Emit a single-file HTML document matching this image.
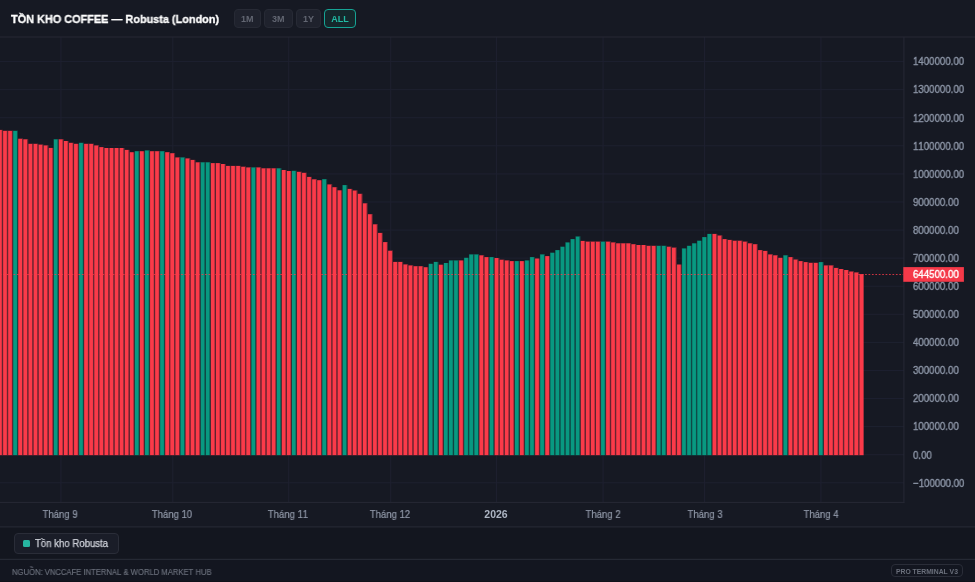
<!DOCTYPE html>
<html><head><meta charset="utf-8">
<style>
html,body{margin:0;padding:0;}
body{font-kerning:none;width:975px;height:582px;overflow:hidden;background:#161923;position:relative;font-family:"Liberation Sans",sans-serif;}
.abs{position:absolute;}
div{will-change:transform;}
.title{-webkit-text-stroke:0.3px currentColor;transform:scaleX(0.99);transform-origin:0 0;position:absolute;left:11px;top:11px;font-size:11px;font-weight:bold;color:#ffffff;white-space:nowrap;line-height:16px;}
.btn{position:absolute;top:8.5px;height:19px;box-sizing:border-box;border:1px solid #272a35;background:#1f222d;border-radius:4px;color:#626672;font-size:9px;font-weight:bold;text-align:center;line-height:18px;}
.btn.on{border:1.5px solid #16a394;background:#15282c;color:#22bba4;line-height:18px;}
.pl{-webkit-text-stroke:0.4px currentColor;position:absolute;left:912.8px;font-size:11px;line-height:13px;transform:scaleX(0.88);transform-origin:0 0;color:#8c95a6;white-space:nowrap;}
.tl{-webkit-text-stroke:0.2px currentColor;position:absolute;top:507.6px;width:80px;text-align:center;font-size:10.5px;line-height:13px;transform:scaleX(0.91);color:#939bab;white-space:nowrap;}
.tl.b{-webkit-text-stroke:0;font-weight:bold;color:#adb5c3;transform:none;}
.hl{position:absolute;left:0;width:975px;height:1px;background:#262935;}
</style></head><body>
<div class="title">TỒN KHO COFFEE — Robusta (London)</div>
<div class="btn" style="left:234px;width:26.5px">1M</div>
<div class="btn" style="left:264px;width:28.6px">3M</div>
<div class="btn" style="left:296px;width:25.2px">1Y</div>
<div class="btn on" style="left:324.2px;width:32px">ALL</div>
<svg class="abs" style="left:0;top:0" width="975" height="582" viewBox="0 0 975 582">
<rect x="0" y="482.28" width="904" height="1" fill="#1e2130"/><rect x="0" y="454.20" width="904" height="1" fill="#1e2130"/><rect x="0" y="426.12" width="904" height="1" fill="#1e2130"/><rect x="0" y="398.04" width="904" height="1" fill="#1e2130"/><rect x="0" y="369.96" width="904" height="1" fill="#1e2130"/><rect x="0" y="341.88" width="904" height="1" fill="#1e2130"/><rect x="0" y="313.80" width="904" height="1" fill="#1e2130"/><rect x="0" y="285.72" width="904" height="1" fill="#1e2130"/><rect x="0" y="257.64" width="904" height="1" fill="#1e2130"/><rect x="0" y="229.56" width="904" height="1" fill="#1e2130"/><rect x="0" y="201.48" width="904" height="1" fill="#1e2130"/><rect x="0" y="173.40" width="904" height="1" fill="#1e2130"/><rect x="0" y="145.32" width="904" height="1" fill="#1e2130"/><rect x="0" y="117.24" width="904" height="1" fill="#1e2130"/><rect x="0" y="89.16" width="904" height="1" fill="#1e2130"/><rect x="0" y="61.08" width="904" height="1" fill="#1e2130"/>
<rect x="60.40" y="37" width="1" height="465" fill="#1e2130"/><rect x="172.30" y="37" width="1" height="465" fill="#1e2130"/><rect x="288.20" y="37" width="1" height="465" fill="#1e2130"/><rect x="390.20" y="37" width="1" height="465" fill="#1e2130"/><rect x="495.90" y="37" width="1" height="465" fill="#1e2130"/><rect x="602.60" y="37" width="1" height="465" fill="#1e2130"/><rect x="704.10" y="37" width="1" height="465" fill="#1e2130"/><rect x="820.40" y="37" width="1" height="465" fill="#1e2130"/>
<rect x="-2.29" y="129.90" width="5.09" height="325.30" fill="#fb3a49"/>
<rect x="2.78" y="130.80" width="5.09" height="324.40" fill="#fb3a49"/>
<rect x="7.85" y="130.80" width="5.09" height="324.40" fill="#fb3a49"/>
<rect x="12.91" y="130.80" width="5.09" height="324.40" fill="#089981"/>
<rect x="17.98" y="138.70" width="5.09" height="316.50" fill="#fb3a49"/>
<rect x="23.05" y="139.30" width="5.09" height="315.90" fill="#fb3a49"/>
<rect x="28.12" y="143.80" width="5.09" height="311.40" fill="#fb3a49"/>
<rect x="33.18" y="143.80" width="5.09" height="311.40" fill="#fb3a49"/>
<rect x="38.25" y="144.60" width="5.09" height="310.60" fill="#fb3a49"/>
<rect x="43.32" y="145.40" width="5.09" height="309.80" fill="#fb3a49"/>
<rect x="48.38" y="147.90" width="5.09" height="307.30" fill="#fb3a49"/>
<rect x="53.45" y="139.30" width="5.09" height="315.90" fill="#089981"/>
<rect x="58.52" y="139.30" width="5.09" height="315.90" fill="#fb3a49"/>
<rect x="63.58" y="141.00" width="5.09" height="314.20" fill="#fb3a49"/>
<rect x="68.65" y="142.80" width="5.09" height="312.40" fill="#fb3a49"/>
<rect x="73.72" y="143.80" width="5.09" height="311.40" fill="#fb3a49"/>
<rect x="78.78" y="142.80" width="5.09" height="312.40" fill="#089981"/>
<rect x="83.85" y="143.80" width="5.09" height="311.40" fill="#fb3a49"/>
<rect x="88.92" y="143.80" width="5.09" height="311.40" fill="#fb3a49"/>
<rect x="93.99" y="145.40" width="5.09" height="309.80" fill="#fb3a49"/>
<rect x="99.05" y="147.10" width="5.09" height="308.10" fill="#fb3a49"/>
<rect x="104.12" y="148.00" width="5.09" height="307.20" fill="#fb3a49"/>
<rect x="109.19" y="148.00" width="5.09" height="307.20" fill="#fb3a49"/>
<rect x="114.25" y="148.00" width="5.09" height="307.20" fill="#fb3a49"/>
<rect x="119.32" y="148.00" width="5.09" height="307.20" fill="#fb3a49"/>
<rect x="124.39" y="149.90" width="5.09" height="305.30" fill="#fb3a49"/>
<rect x="129.46" y="152.20" width="5.09" height="303.00" fill="#fb3a49"/>
<rect x="134.52" y="151.20" width="5.09" height="304.00" fill="#089981"/>
<rect x="139.59" y="151.20" width="5.09" height="304.00" fill="#fb3a49"/>
<rect x="144.66" y="150.40" width="5.09" height="304.80" fill="#089981"/>
<rect x="149.72" y="151.20" width="5.09" height="304.00" fill="#fb3a49"/>
<rect x="154.79" y="151.20" width="5.09" height="304.00" fill="#fb3a49"/>
<rect x="159.86" y="151.20" width="5.09" height="304.00" fill="#089981"/>
<rect x="164.92" y="152.20" width="5.09" height="303.00" fill="#fb3a49"/>
<rect x="169.99" y="153.20" width="5.09" height="302.00" fill="#fb3a49"/>
<rect x="175.06" y="157.40" width="5.09" height="297.80" fill="#fb3a49"/>
<rect x="180.12" y="157.40" width="5.09" height="297.80" fill="#089981"/>
<rect x="185.19" y="158.40" width="5.09" height="296.80" fill="#fb3a49"/>
<rect x="190.26" y="159.90" width="5.09" height="295.30" fill="#fb3a49"/>
<rect x="195.33" y="162.30" width="5.09" height="292.90" fill="#fb3a49"/>
<rect x="200.39" y="162.30" width="5.09" height="292.90" fill="#089981"/>
<rect x="205.46" y="162.30" width="5.09" height="292.90" fill="#089981"/>
<rect x="210.53" y="163.10" width="5.09" height="292.10" fill="#fb3a49"/>
<rect x="215.59" y="163.10" width="5.09" height="292.10" fill="#fb3a49"/>
<rect x="220.66" y="164.00" width="5.09" height="291.20" fill="#fb3a49"/>
<rect x="225.73" y="165.90" width="5.09" height="289.30" fill="#fb3a49"/>
<rect x="230.80" y="165.90" width="5.09" height="289.30" fill="#fb3a49"/>
<rect x="235.86" y="165.90" width="5.09" height="289.30" fill="#fb3a49"/>
<rect x="240.93" y="166.70" width="5.09" height="288.50" fill="#fb3a49"/>
<rect x="246.00" y="167.40" width="5.09" height="287.80" fill="#fb3a49"/>
<rect x="251.06" y="167.40" width="5.09" height="287.80" fill="#089981"/>
<rect x="256.13" y="167.40" width="5.09" height="287.80" fill="#fb3a49"/>
<rect x="261.20" y="168.30" width="5.09" height="286.90" fill="#fb3a49"/>
<rect x="266.26" y="168.30" width="5.09" height="286.90" fill="#fb3a49"/>
<rect x="271.33" y="168.30" width="5.09" height="286.90" fill="#fb3a49"/>
<rect x="276.40" y="168.30" width="5.09" height="286.90" fill="#089981"/>
<rect x="281.46" y="170.00" width="5.09" height="285.20" fill="#fb3a49"/>
<rect x="286.53" y="171.00" width="5.09" height="284.20" fill="#fb3a49"/>
<rect x="291.60" y="170.80" width="5.09" height="284.40" fill="#089981"/>
<rect x="296.67" y="171.80" width="5.09" height="283.40" fill="#fb3a49"/>
<rect x="301.73" y="172.80" width="5.09" height="282.40" fill="#fb3a49"/>
<rect x="306.80" y="176.90" width="5.09" height="278.30" fill="#fb3a49"/>
<rect x="311.87" y="179.30" width="5.09" height="275.90" fill="#fb3a49"/>
<rect x="316.93" y="180.20" width="5.09" height="275.00" fill="#fb3a49"/>
<rect x="322.00" y="179.20" width="5.09" height="276.00" fill="#089981"/>
<rect x="327.07" y="184.40" width="5.09" height="270.80" fill="#fb3a49"/>
<rect x="332.13" y="187.20" width="5.09" height="268.00" fill="#fb3a49"/>
<rect x="337.20" y="190.30" width="5.09" height="264.90" fill="#fb3a49"/>
<rect x="342.27" y="185.10" width="5.09" height="270.10" fill="#089981"/>
<rect x="347.34" y="188.90" width="5.09" height="266.30" fill="#fb3a49"/>
<rect x="352.40" y="190.50" width="5.09" height="264.70" fill="#fb3a49"/>
<rect x="357.47" y="193.80" width="5.09" height="261.40" fill="#fb3a49"/>
<rect x="362.54" y="203.30" width="5.09" height="251.90" fill="#fb3a49"/>
<rect x="367.60" y="214.20" width="5.09" height="241.00" fill="#fb3a49"/>
<rect x="372.67" y="224.30" width="5.09" height="230.90" fill="#fb3a49"/>
<rect x="377.74" y="232.90" width="5.09" height="222.30" fill="#fb3a49"/>
<rect x="382.81" y="242.10" width="5.09" height="213.10" fill="#fb3a49"/>
<rect x="387.87" y="250.70" width="5.09" height="204.50" fill="#fb3a49"/>
<rect x="392.94" y="261.90" width="5.09" height="193.30" fill="#fb3a49"/>
<rect x="398.01" y="261.90" width="5.09" height="193.30" fill="#fb3a49"/>
<rect x="403.07" y="264.40" width="5.09" height="190.80" fill="#fb3a49"/>
<rect x="408.14" y="265.40" width="5.09" height="189.80" fill="#fb3a49"/>
<rect x="413.21" y="266.20" width="5.09" height="189.00" fill="#fb3a49"/>
<rect x="418.27" y="266.20" width="5.09" height="189.00" fill="#fb3a49"/>
<rect x="423.34" y="267.20" width="5.09" height="188.00" fill="#fb3a49"/>
<rect x="428.41" y="263.80" width="5.09" height="191.40" fill="#089981"/>
<rect x="433.47" y="261.90" width="5.09" height="193.30" fill="#089981"/>
<rect x="438.54" y="264.70" width="5.09" height="190.50" fill="#fb3a49"/>
<rect x="443.61" y="263.00" width="5.09" height="192.20" fill="#089981"/>
<rect x="448.68" y="260.40" width="5.09" height="194.80" fill="#089981"/>
<rect x="453.74" y="260.40" width="5.09" height="194.80" fill="#089981"/>
<rect x="458.81" y="260.40" width="5.09" height="194.80" fill="#fb3a49"/>
<rect x="463.88" y="257.80" width="5.09" height="197.40" fill="#089981"/>
<rect x="468.94" y="254.40" width="5.09" height="200.80" fill="#089981"/>
<rect x="474.01" y="254.40" width="5.09" height="200.80" fill="#089981"/>
<rect x="479.08" y="255.30" width="5.09" height="199.90" fill="#fb3a49"/>
<rect x="484.14" y="257.10" width="5.09" height="198.10" fill="#fb3a49"/>
<rect x="489.21" y="257.10" width="5.09" height="198.10" fill="#089981"/>
<rect x="494.28" y="258.00" width="5.09" height="197.20" fill="#fb3a49"/>
<rect x="499.35" y="259.70" width="5.09" height="195.50" fill="#fb3a49"/>
<rect x="504.41" y="260.40" width="5.09" height="194.80" fill="#fb3a49"/>
<rect x="509.48" y="261.10" width="5.09" height="194.10" fill="#fb3a49"/>
<rect x="514.55" y="261.10" width="5.09" height="194.10" fill="#089981"/>
<rect x="519.61" y="261.10" width="5.09" height="194.10" fill="#fb3a49"/>
<rect x="524.68" y="260.40" width="5.09" height="194.80" fill="#089981"/>
<rect x="529.75" y="257.10" width="5.09" height="198.10" fill="#089981"/>
<rect x="534.81" y="258.50" width="5.09" height="196.70" fill="#fb3a49"/>
<rect x="539.88" y="254.40" width="5.09" height="200.80" fill="#089981"/>
<rect x="544.95" y="256.10" width="5.09" height="199.10" fill="#fb3a49"/>
<rect x="550.02" y="252.70" width="5.09" height="202.50" fill="#089981"/>
<rect x="555.08" y="250.10" width="5.09" height="205.10" fill="#089981"/>
<rect x="560.15" y="246.70" width="5.09" height="208.50" fill="#089981"/>
<rect x="565.22" y="242.40" width="5.09" height="212.80" fill="#089981"/>
<rect x="570.28" y="239.10" width="5.09" height="216.10" fill="#089981"/>
<rect x="575.35" y="236.50" width="5.09" height="218.70" fill="#089981"/>
<rect x="580.42" y="240.90" width="5.09" height="214.30" fill="#fb3a49"/>
<rect x="585.49" y="241.60" width="5.09" height="213.60" fill="#fb3a49"/>
<rect x="590.55" y="241.60" width="5.09" height="213.60" fill="#fb3a49"/>
<rect x="595.62" y="241.60" width="5.09" height="213.60" fill="#fb3a49"/>
<rect x="600.69" y="241.60" width="5.09" height="213.60" fill="#089981"/>
<rect x="605.75" y="241.60" width="5.09" height="213.60" fill="#fb3a49"/>
<rect x="610.82" y="242.40" width="5.09" height="212.80" fill="#fb3a49"/>
<rect x="615.89" y="243.30" width="5.09" height="211.90" fill="#fb3a49"/>
<rect x="620.95" y="243.30" width="5.09" height="211.90" fill="#fb3a49"/>
<rect x="626.02" y="243.30" width="5.09" height="211.90" fill="#fb3a49"/>
<rect x="631.09" y="244.20" width="5.09" height="211.00" fill="#fb3a49"/>
<rect x="636.15" y="245.00" width="5.09" height="210.20" fill="#fb3a49"/>
<rect x="641.22" y="245.00" width="5.09" height="210.20" fill="#fb3a49"/>
<rect x="646.29" y="245.80" width="5.09" height="209.40" fill="#fb3a49"/>
<rect x="651.36" y="245.80" width="5.09" height="209.40" fill="#fb3a49"/>
<rect x="656.42" y="245.80" width="5.09" height="209.40" fill="#089981"/>
<rect x="661.49" y="245.80" width="5.09" height="209.40" fill="#089981"/>
<rect x="666.56" y="246.70" width="5.09" height="208.50" fill="#fb3a49"/>
<rect x="671.62" y="247.60" width="5.09" height="207.60" fill="#fb3a49"/>
<rect x="676.69" y="264.50" width="5.09" height="190.70" fill="#fb3a49"/>
<rect x="681.76" y="248.40" width="5.09" height="206.80" fill="#089981"/>
<rect x="686.83" y="245.80" width="5.09" height="209.40" fill="#089981"/>
<rect x="691.89" y="243.30" width="5.09" height="211.90" fill="#089981"/>
<rect x="696.96" y="240.70" width="5.09" height="214.50" fill="#089981"/>
<rect x="702.03" y="237.10" width="5.09" height="218.10" fill="#089981"/>
<rect x="707.09" y="233.90" width="5.09" height="221.30" fill="#089981"/>
<rect x="712.16" y="233.90" width="5.09" height="221.30" fill="#fb3a49"/>
<rect x="717.23" y="235.50" width="5.09" height="219.70" fill="#fb3a49"/>
<rect x="722.29" y="239.10" width="5.09" height="216.10" fill="#fb3a49"/>
<rect x="727.36" y="239.90" width="5.09" height="215.30" fill="#fb3a49"/>
<rect x="732.43" y="240.70" width="5.09" height="214.50" fill="#fb3a49"/>
<rect x="737.50" y="240.70" width="5.09" height="214.50" fill="#fb3a49"/>
<rect x="742.56" y="241.60" width="5.09" height="213.60" fill="#fb3a49"/>
<rect x="747.63" y="243.30" width="5.09" height="211.90" fill="#fb3a49"/>
<rect x="752.70" y="244.20" width="5.09" height="211.00" fill="#fb3a49"/>
<rect x="757.76" y="250.10" width="5.09" height="205.10" fill="#fb3a49"/>
<rect x="762.83" y="250.90" width="5.09" height="204.30" fill="#fb3a49"/>
<rect x="767.90" y="254.40" width="5.09" height="200.80" fill="#fb3a49"/>
<rect x="772.96" y="255.30" width="5.09" height="199.90" fill="#fb3a49"/>
<rect x="778.03" y="257.80" width="5.09" height="197.40" fill="#fb3a49"/>
<rect x="783.10" y="255.30" width="5.09" height="199.90" fill="#089981"/>
<rect x="788.16" y="257.10" width="5.09" height="198.10" fill="#fb3a49"/>
<rect x="793.23" y="259.50" width="5.09" height="195.70" fill="#fb3a49"/>
<rect x="798.30" y="261.10" width="5.09" height="194.10" fill="#fb3a49"/>
<rect x="803.37" y="262.10" width="5.09" height="193.10" fill="#fb3a49"/>
<rect x="808.43" y="262.80" width="5.09" height="192.40" fill="#fb3a49"/>
<rect x="813.50" y="262.80" width="5.09" height="192.40" fill="#fb3a49"/>
<rect x="818.57" y="262.10" width="5.09" height="193.10" fill="#089981"/>
<rect x="823.63" y="265.40" width="5.09" height="189.80" fill="#fb3a49"/>
<rect x="828.70" y="265.40" width="5.09" height="189.80" fill="#fb3a49"/>
<rect x="833.77" y="267.90" width="5.09" height="187.30" fill="#fb3a49"/>
<rect x="838.84" y="269.00" width="5.09" height="186.20" fill="#fb3a49"/>
<rect x="843.90" y="270.00" width="5.09" height="185.20" fill="#fb3a49"/>
<rect x="848.97" y="271.50" width="5.09" height="183.70" fill="#fb3a49"/>
<rect x="854.04" y="272.40" width="5.09" height="182.80" fill="#fb3a49"/>
<rect x="859.10" y="274.10" width="4.52" height="181.10" fill="#fb3a49"/>
<rect x="1.76" y="129.90" width="1.40" height="325.30" fill="#161923" fill-opacity="0.6"/>
<rect x="6.82" y="130.80" width="1.40" height="324.40" fill="#161923" fill-opacity="0.6"/>
<rect x="11.89" y="130.80" width="1.40" height="324.40" fill="#161923" fill-opacity="0.6"/>
<rect x="16.96" y="130.80" width="1.40" height="324.40" fill="#161923" fill-opacity="0.6"/>
<rect x="22.02" y="138.70" width="1.40" height="316.50" fill="#161923" fill-opacity="0.6"/>
<rect x="27.09" y="139.30" width="1.40" height="315.90" fill="#161923" fill-opacity="0.6"/>
<rect x="32.16" y="143.80" width="1.40" height="311.40" fill="#161923" fill-opacity="0.6"/>
<rect x="37.23" y="143.80" width="1.40" height="311.40" fill="#161923" fill-opacity="0.6"/>
<rect x="42.29" y="144.60" width="1.40" height="310.60" fill="#161923" fill-opacity="0.6"/>
<rect x="47.36" y="145.40" width="1.40" height="309.80" fill="#161923" fill-opacity="0.6"/>
<rect x="52.43" y="139.30" width="1.40" height="315.90" fill="#161923" fill-opacity="0.6"/>
<rect x="57.49" y="139.30" width="1.40" height="315.90" fill="#161923" fill-opacity="0.6"/>
<rect x="62.56" y="139.30" width="1.40" height="315.90" fill="#161923" fill-opacity="0.6"/>
<rect x="67.63" y="141.00" width="1.40" height="314.20" fill="#161923" fill-opacity="0.6"/>
<rect x="72.69" y="142.80" width="1.40" height="312.40" fill="#161923" fill-opacity="0.6"/>
<rect x="77.76" y="142.80" width="1.40" height="312.40" fill="#161923" fill-opacity="0.6"/>
<rect x="82.83" y="142.80" width="1.40" height="312.40" fill="#161923" fill-opacity="0.6"/>
<rect x="87.90" y="143.80" width="1.40" height="311.40" fill="#161923" fill-opacity="0.6"/>
<rect x="92.96" y="143.80" width="1.40" height="311.40" fill="#161923" fill-opacity="0.6"/>
<rect x="98.03" y="145.40" width="1.40" height="309.80" fill="#161923" fill-opacity="0.6"/>
<rect x="103.10" y="147.10" width="1.40" height="308.10" fill="#161923" fill-opacity="0.6"/>
<rect x="108.16" y="148.00" width="1.40" height="307.20" fill="#161923" fill-opacity="0.6"/>
<rect x="113.23" y="148.00" width="1.40" height="307.20" fill="#161923" fill-opacity="0.6"/>
<rect x="118.30" y="148.00" width="1.40" height="307.20" fill="#161923" fill-opacity="0.6"/>
<rect x="123.36" y="148.00" width="1.40" height="307.20" fill="#161923" fill-opacity="0.6"/>
<rect x="128.43" y="149.90" width="1.40" height="305.30" fill="#161923" fill-opacity="0.6"/>
<rect x="133.50" y="151.20" width="1.40" height="304.00" fill="#161923" fill-opacity="0.6"/>
<rect x="138.57" y="151.20" width="1.40" height="304.00" fill="#161923" fill-opacity="0.6"/>
<rect x="143.63" y="150.40" width="1.40" height="304.80" fill="#161923" fill-opacity="0.6"/>
<rect x="148.70" y="150.40" width="1.40" height="304.80" fill="#161923" fill-opacity="0.6"/>
<rect x="153.77" y="151.20" width="1.40" height="304.00" fill="#161923" fill-opacity="0.6"/>
<rect x="158.83" y="151.20" width="1.40" height="304.00" fill="#161923" fill-opacity="0.6"/>
<rect x="163.90" y="151.20" width="1.40" height="304.00" fill="#161923" fill-opacity="0.6"/>
<rect x="168.97" y="152.20" width="1.40" height="303.00" fill="#161923" fill-opacity="0.6"/>
<rect x="174.03" y="153.20" width="1.40" height="302.00" fill="#161923" fill-opacity="0.6"/>
<rect x="179.10" y="157.40" width="1.40" height="297.80" fill="#161923" fill-opacity="0.6"/>
<rect x="184.17" y="157.40" width="1.40" height="297.80" fill="#161923" fill-opacity="0.6"/>
<rect x="189.24" y="158.40" width="1.40" height="296.80" fill="#161923" fill-opacity="0.6"/>
<rect x="194.30" y="159.90" width="1.40" height="295.30" fill="#161923" fill-opacity="0.6"/>
<rect x="199.37" y="162.30" width="1.40" height="292.90" fill="#161923" fill-opacity="0.6"/>
<rect x="204.44" y="162.30" width="1.40" height="292.90" fill="#161923" fill-opacity="0.6"/>
<rect x="209.50" y="162.30" width="1.40" height="292.90" fill="#161923" fill-opacity="0.6"/>
<rect x="214.57" y="163.10" width="1.40" height="292.10" fill="#161923" fill-opacity="0.6"/>
<rect x="219.64" y="163.10" width="1.40" height="292.10" fill="#161923" fill-opacity="0.6"/>
<rect x="224.70" y="164.00" width="1.40" height="291.20" fill="#161923" fill-opacity="0.6"/>
<rect x="229.77" y="165.90" width="1.40" height="289.30" fill="#161923" fill-opacity="0.6"/>
<rect x="234.84" y="165.90" width="1.40" height="289.30" fill="#161923" fill-opacity="0.6"/>
<rect x="239.91" y="165.90" width="1.40" height="289.30" fill="#161923" fill-opacity="0.6"/>
<rect x="244.97" y="166.70" width="1.40" height="288.50" fill="#161923" fill-opacity="0.6"/>
<rect x="250.04" y="167.40" width="1.40" height="287.80" fill="#161923" fill-opacity="0.6"/>
<rect x="255.11" y="167.40" width="1.40" height="287.80" fill="#161923" fill-opacity="0.6"/>
<rect x="260.17" y="167.40" width="1.40" height="287.80" fill="#161923" fill-opacity="0.6"/>
<rect x="265.24" y="168.30" width="1.40" height="286.90" fill="#161923" fill-opacity="0.6"/>
<rect x="270.31" y="168.30" width="1.40" height="286.90" fill="#161923" fill-opacity="0.6"/>
<rect x="275.37" y="168.30" width="1.40" height="286.90" fill="#161923" fill-opacity="0.6"/>
<rect x="280.44" y="168.30" width="1.40" height="286.90" fill="#161923" fill-opacity="0.6"/>
<rect x="285.51" y="170.00" width="1.40" height="285.20" fill="#161923" fill-opacity="0.6"/>
<rect x="290.58" y="170.80" width="1.40" height="284.40" fill="#161923" fill-opacity="0.6"/>
<rect x="295.64" y="170.80" width="1.40" height="284.40" fill="#161923" fill-opacity="0.6"/>
<rect x="300.71" y="171.80" width="1.40" height="283.40" fill="#161923" fill-opacity="0.6"/>
<rect x="305.78" y="172.80" width="1.40" height="282.40" fill="#161923" fill-opacity="0.6"/>
<rect x="310.84" y="176.90" width="1.40" height="278.30" fill="#161923" fill-opacity="0.6"/>
<rect x="315.91" y="179.30" width="1.40" height="275.90" fill="#161923" fill-opacity="0.6"/>
<rect x="320.98" y="179.20" width="1.40" height="276.00" fill="#161923" fill-opacity="0.6"/>
<rect x="326.04" y="179.20" width="1.40" height="276.00" fill="#161923" fill-opacity="0.6"/>
<rect x="331.11" y="184.40" width="1.40" height="270.80" fill="#161923" fill-opacity="0.6"/>
<rect x="336.18" y="187.20" width="1.40" height="268.00" fill="#161923" fill-opacity="0.6"/>
<rect x="341.25" y="185.10" width="1.40" height="270.10" fill="#161923" fill-opacity="0.6"/>
<rect x="346.31" y="185.10" width="1.40" height="270.10" fill="#161923" fill-opacity="0.6"/>
<rect x="351.38" y="188.90" width="1.40" height="266.30" fill="#161923" fill-opacity="0.6"/>
<rect x="356.45" y="190.50" width="1.40" height="264.70" fill="#161923" fill-opacity="0.6"/>
<rect x="361.51" y="193.80" width="1.40" height="261.40" fill="#161923" fill-opacity="0.6"/>
<rect x="366.58" y="203.30" width="1.40" height="251.90" fill="#161923" fill-opacity="0.6"/>
<rect x="371.65" y="214.20" width="1.40" height="241.00" fill="#161923" fill-opacity="0.6"/>
<rect x="376.71" y="224.30" width="1.40" height="230.90" fill="#161923" fill-opacity="0.6"/>
<rect x="381.78" y="232.90" width="1.40" height="222.30" fill="#161923" fill-opacity="0.6"/>
<rect x="386.85" y="242.10" width="1.40" height="213.10" fill="#161923" fill-opacity="0.6"/>
<rect x="391.92" y="250.70" width="1.40" height="204.50" fill="#161923" fill-opacity="0.6"/>
<rect x="396.98" y="261.90" width="1.40" height="193.30" fill="#161923" fill-opacity="0.6"/>
<rect x="402.05" y="261.90" width="1.40" height="193.30" fill="#161923" fill-opacity="0.6"/>
<rect x="407.12" y="264.40" width="1.40" height="190.80" fill="#161923" fill-opacity="0.6"/>
<rect x="412.18" y="265.40" width="1.40" height="189.80" fill="#161923" fill-opacity="0.6"/>
<rect x="417.25" y="266.20" width="1.40" height="189.00" fill="#161923" fill-opacity="0.6"/>
<rect x="422.32" y="266.20" width="1.40" height="189.00" fill="#161923" fill-opacity="0.6"/>
<rect x="427.38" y="263.80" width="1.40" height="191.40" fill="#161923" fill-opacity="0.6"/>
<rect x="432.45" y="261.90" width="1.40" height="193.30" fill="#161923" fill-opacity="0.6"/>
<rect x="437.52" y="261.90" width="1.40" height="193.30" fill="#161923" fill-opacity="0.6"/>
<rect x="442.59" y="263.00" width="1.40" height="192.20" fill="#161923" fill-opacity="0.6"/>
<rect x="447.65" y="260.40" width="1.40" height="194.80" fill="#161923" fill-opacity="0.6"/>
<rect x="452.72" y="260.40" width="1.40" height="194.80" fill="#161923" fill-opacity="0.6"/>
<rect x="457.79" y="260.40" width="1.40" height="194.80" fill="#161923" fill-opacity="0.6"/>
<rect x="462.85" y="257.80" width="1.40" height="197.40" fill="#161923" fill-opacity="0.6"/>
<rect x="467.92" y="254.40" width="1.40" height="200.80" fill="#161923" fill-opacity="0.6"/>
<rect x="472.99" y="254.40" width="1.40" height="200.80" fill="#161923" fill-opacity="0.6"/>
<rect x="478.05" y="254.40" width="1.40" height="200.80" fill="#161923" fill-opacity="0.6"/>
<rect x="483.12" y="255.30" width="1.40" height="199.90" fill="#161923" fill-opacity="0.6"/>
<rect x="488.19" y="257.10" width="1.40" height="198.10" fill="#161923" fill-opacity="0.6"/>
<rect x="493.26" y="257.10" width="1.40" height="198.10" fill="#161923" fill-opacity="0.6"/>
<rect x="498.32" y="258.00" width="1.40" height="197.20" fill="#161923" fill-opacity="0.6"/>
<rect x="503.39" y="259.70" width="1.40" height="195.50" fill="#161923" fill-opacity="0.6"/>
<rect x="508.46" y="260.40" width="1.40" height="194.80" fill="#161923" fill-opacity="0.6"/>
<rect x="513.52" y="261.10" width="1.40" height="194.10" fill="#161923" fill-opacity="0.6"/>
<rect x="518.59" y="261.10" width="1.40" height="194.10" fill="#161923" fill-opacity="0.6"/>
<rect x="523.66" y="260.40" width="1.40" height="194.80" fill="#161923" fill-opacity="0.6"/>
<rect x="528.72" y="257.10" width="1.40" height="198.10" fill="#161923" fill-opacity="0.6"/>
<rect x="533.79" y="257.10" width="1.40" height="198.10" fill="#161923" fill-opacity="0.6"/>
<rect x="538.86" y="254.40" width="1.40" height="200.80" fill="#161923" fill-opacity="0.6"/>
<rect x="543.93" y="254.40" width="1.40" height="200.80" fill="#161923" fill-opacity="0.6"/>
<rect x="548.99" y="252.70" width="1.40" height="202.50" fill="#161923" fill-opacity="0.6"/>
<rect x="554.06" y="250.10" width="1.40" height="205.10" fill="#161923" fill-opacity="0.6"/>
<rect x="559.13" y="246.70" width="1.40" height="208.50" fill="#161923" fill-opacity="0.6"/>
<rect x="564.19" y="242.40" width="1.40" height="212.80" fill="#161923" fill-opacity="0.6"/>
<rect x="569.26" y="239.10" width="1.40" height="216.10" fill="#161923" fill-opacity="0.6"/>
<rect x="574.33" y="236.50" width="1.40" height="218.70" fill="#161923" fill-opacity="0.6"/>
<rect x="579.39" y="236.50" width="1.40" height="218.70" fill="#161923" fill-opacity="0.6"/>
<rect x="584.46" y="240.90" width="1.40" height="214.30" fill="#161923" fill-opacity="0.6"/>
<rect x="589.53" y="241.60" width="1.40" height="213.60" fill="#161923" fill-opacity="0.6"/>
<rect x="594.60" y="241.60" width="1.40" height="213.60" fill="#161923" fill-opacity="0.6"/>
<rect x="599.66" y="241.60" width="1.40" height="213.60" fill="#161923" fill-opacity="0.6"/>
<rect x="604.73" y="241.60" width="1.40" height="213.60" fill="#161923" fill-opacity="0.6"/>
<rect x="609.80" y="241.60" width="1.40" height="213.60" fill="#161923" fill-opacity="0.6"/>
<rect x="614.86" y="242.40" width="1.40" height="212.80" fill="#161923" fill-opacity="0.6"/>
<rect x="619.93" y="243.30" width="1.40" height="211.90" fill="#161923" fill-opacity="0.6"/>
<rect x="625.00" y="243.30" width="1.40" height="211.90" fill="#161923" fill-opacity="0.6"/>
<rect x="630.06" y="243.30" width="1.40" height="211.90" fill="#161923" fill-opacity="0.6"/>
<rect x="635.13" y="244.20" width="1.40" height="211.00" fill="#161923" fill-opacity="0.6"/>
<rect x="640.20" y="245.00" width="1.40" height="210.20" fill="#161923" fill-opacity="0.6"/>
<rect x="645.27" y="245.00" width="1.40" height="210.20" fill="#161923" fill-opacity="0.6"/>
<rect x="650.33" y="245.80" width="1.40" height="209.40" fill="#161923" fill-opacity="0.6"/>
<rect x="655.40" y="245.80" width="1.40" height="209.40" fill="#161923" fill-opacity="0.6"/>
<rect x="660.47" y="245.80" width="1.40" height="209.40" fill="#161923" fill-opacity="0.6"/>
<rect x="665.53" y="245.80" width="1.40" height="209.40" fill="#161923" fill-opacity="0.6"/>
<rect x="670.60" y="246.70" width="1.40" height="208.50" fill="#161923" fill-opacity="0.6"/>
<rect x="675.67" y="247.60" width="1.40" height="207.60" fill="#161923" fill-opacity="0.6"/>
<rect x="680.73" y="248.40" width="1.40" height="206.80" fill="#161923" fill-opacity="0.6"/>
<rect x="685.80" y="245.80" width="1.40" height="209.40" fill="#161923" fill-opacity="0.6"/>
<rect x="690.87" y="243.30" width="1.40" height="211.90" fill="#161923" fill-opacity="0.6"/>
<rect x="695.94" y="240.70" width="1.40" height="214.50" fill="#161923" fill-opacity="0.6"/>
<rect x="701.00" y="237.10" width="1.40" height="218.10" fill="#161923" fill-opacity="0.6"/>
<rect x="706.07" y="233.90" width="1.40" height="221.30" fill="#161923" fill-opacity="0.6"/>
<rect x="711.14" y="233.90" width="1.40" height="221.30" fill="#161923" fill-opacity="0.6"/>
<rect x="716.20" y="233.90" width="1.40" height="221.30" fill="#161923" fill-opacity="0.6"/>
<rect x="721.27" y="235.50" width="1.40" height="219.70" fill="#161923" fill-opacity="0.6"/>
<rect x="726.34" y="239.10" width="1.40" height="216.10" fill="#161923" fill-opacity="0.6"/>
<rect x="731.40" y="239.90" width="1.40" height="215.30" fill="#161923" fill-opacity="0.6"/>
<rect x="736.47" y="240.70" width="1.40" height="214.50" fill="#161923" fill-opacity="0.6"/>
<rect x="741.54" y="240.70" width="1.40" height="214.50" fill="#161923" fill-opacity="0.6"/>
<rect x="746.61" y="241.60" width="1.40" height="213.60" fill="#161923" fill-opacity="0.6"/>
<rect x="751.67" y="243.30" width="1.40" height="211.90" fill="#161923" fill-opacity="0.6"/>
<rect x="756.74" y="244.20" width="1.40" height="211.00" fill="#161923" fill-opacity="0.6"/>
<rect x="761.81" y="250.10" width="1.40" height="205.10" fill="#161923" fill-opacity="0.6"/>
<rect x="766.87" y="250.90" width="1.40" height="204.30" fill="#161923" fill-opacity="0.6"/>
<rect x="771.94" y="254.40" width="1.40" height="200.80" fill="#161923" fill-opacity="0.6"/>
<rect x="777.01" y="255.30" width="1.40" height="199.90" fill="#161923" fill-opacity="0.6"/>
<rect x="782.07" y="255.30" width="1.40" height="199.90" fill="#161923" fill-opacity="0.6"/>
<rect x="787.14" y="255.30" width="1.40" height="199.90" fill="#161923" fill-opacity="0.6"/>
<rect x="792.21" y="257.10" width="1.40" height="198.10" fill="#161923" fill-opacity="0.6"/>
<rect x="797.28" y="259.50" width="1.40" height="195.70" fill="#161923" fill-opacity="0.6"/>
<rect x="802.34" y="261.10" width="1.40" height="194.10" fill="#161923" fill-opacity="0.6"/>
<rect x="807.41" y="262.10" width="1.40" height="193.10" fill="#161923" fill-opacity="0.6"/>
<rect x="812.48" y="262.80" width="1.40" height="192.40" fill="#161923" fill-opacity="0.6"/>
<rect x="817.54" y="262.10" width="1.40" height="193.10" fill="#161923" fill-opacity="0.6"/>
<rect x="822.61" y="262.10" width="1.40" height="193.10" fill="#161923" fill-opacity="0.6"/>
<rect x="827.68" y="265.40" width="1.40" height="189.80" fill="#161923" fill-opacity="0.6"/>
<rect x="832.74" y="265.40" width="1.40" height="189.80" fill="#161923" fill-opacity="0.6"/>
<rect x="837.81" y="267.90" width="1.40" height="187.30" fill="#161923" fill-opacity="0.6"/>
<rect x="842.88" y="269.00" width="1.40" height="186.20" fill="#161923" fill-opacity="0.6"/>
<rect x="847.95" y="270.00" width="1.40" height="185.20" fill="#161923" fill-opacity="0.6"/>
<rect x="853.01" y="271.50" width="1.40" height="183.70" fill="#161923" fill-opacity="0.6"/>
<rect x="858.08" y="272.40" width="1.40" height="182.80" fill="#161923" fill-opacity="0.6"/>
<line x1="-0.16" y1="274.50" x2="903.3" y2="274.50" stroke="#fb3a49" stroke-width="1" stroke-dasharray="1.71 1.71" stroke-opacity="0.8"/>
<rect x="0" y="527.4" width="975" height="55" fill="#13161f"/>
<rect x="0" y="559.8" width="975" height="23" fill="#131620"/>
<rect x="0" y="581" width="975" height="1" fill="#0f121a"/>
<rect x="0" y="36.5" width="975" height="1" fill="#262935"/>
<rect x="903.4" y="37" width="1" height="465.9" fill="#262935"/>
<rect x="0" y="501.9" width="904.4" height="1" fill="#262935"/>
<rect x="0" y="526.4" width="975" height="1" fill="#282b37"/>
<rect x="0" y="558.8" width="975" height="1" fill="#2b2e3b"/>
<rect x="903.3" y="267.1" width="60.6" height="14.7" fill="#f53949"/>
</svg>
<div class="pl" style="top:476.58px">−100000.00</div><div class="pl" style="top:448.50px">0.00</div><div class="pl" style="top:420.42px">100000.00</div><div class="pl" style="top:392.34px">200000.00</div><div class="pl" style="top:364.26px">300000.00</div><div class="pl" style="top:336.18px">400000.00</div><div class="pl" style="top:308.10px">500000.00</div><div class="pl" style="top:280.02px">600000.00</div><div class="pl" style="top:251.94px">700000.00</div><div class="pl" style="top:223.86px">800000.00</div><div class="pl" style="top:195.78px">900000.00</div><div class="pl" style="top:167.70px">1000000.00</div><div class="pl" style="top:139.62px">1100000.00</div><div class="pl" style="top:111.54px">1200000.00</div><div class="pl" style="top:83.46px">1300000.00</div><div class="pl" style="top:55.38px">1400000.00</div>
<div class="pl" style="top:268.30px;color:#ffffff">644500.00</div>
<div class="tl" style="left:20.30px">Tháng 9</div><div class="tl" style="left:131.80px">Tháng 10</div><div class="tl" style="left:248.40px">Tháng 11</div><div class="tl" style="left:349.80px">Tháng 12</div><div class="tl b" style="left:456.20px">2026</div><div class="tl" style="left:562.90px">Tháng 2</div><div class="tl" style="left:664.50px">Tháng 3</div><div class="tl" style="left:780.80px">Tháng 4</div>
<div class="abs" style="left:13.6px;top:532.6px;width:104.6px;height:21px;box-sizing:border-box;border:1px solid #2a2d38;background:#1a1d28;border-radius:4px;"></div>
<div class="abs" style="left:22.9px;top:539.6px;width:7.2px;height:7.2px;background:#26b5a0;border-radius:1.5px;"></div>
<div class="abs" style="left:34.9px;top:537.1px;font-size:10px;line-height:13px;color:#d1d4dc;-webkit-text-stroke:0.25px currentColor;white-space:nowrap;transform:scaleX(0.96);transform-origin:0 0;">Tồn kho Robusta</div>
<div class="abs" style="left:11.7px;top:565.7px;font-size:8.3px;line-height:12px;color:#6b707c;-webkit-text-stroke:0.15px currentColor;white-space:nowrap;transform:scaleX(0.923);transform-origin:0 0;">NGUỒN: VNCCAFE INTERNAL &amp; WORLD MARKET HUB</div>
<div class="abs" style="left:890.5px;top:564.3px;width:72.3px;height:12.6px;box-sizing:border-box;border:1px solid #2a2d38;border-radius:4px;"></div>
<div class="abs" style="left:895.6px;top:567.2px;font-size:6.8px;font-weight:bold;line-height:9px;color:#6b707c;white-space:nowrap;">PRO TERMINAL V3</div>
</body></html>
